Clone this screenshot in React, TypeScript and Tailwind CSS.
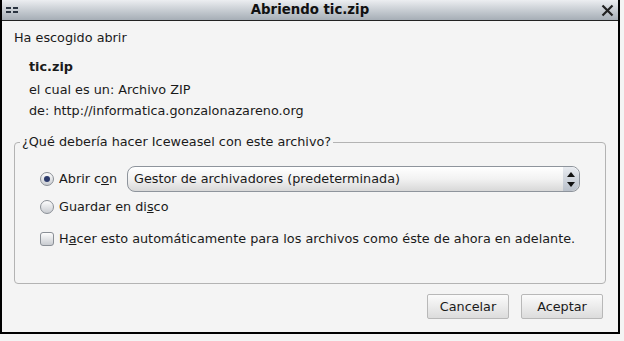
import React from "react";

function Radio({ checked }: { checked?: boolean }) {
  return (
    <span className="flex h-[14px] w-[14px] items-center justify-center rounded-full border border-[#8a8f96] bg-gradient-to-b from-[#fdfdfd] to-[#c9ccd1]">
      {checked && <span className="h-[6px] w-[6px] rounded-full bg-[#2b3a6b]" />}
    </span>
  );
}

export default function App() {
  return (
    <div className="h-[341px] w-[624px] bg-[#f4f4f4] font-['DejaVu_Sans',sans-serif] text-[12.8px] text-[#1a1a1a]">
      <div className="flex h-[334px] w-[620px] flex-col border-x-2 border-b-2 border-black">
        {/* title bar */}
        <div className="relative flex h-[21px] shrink-0 items-center justify-center border-b border-[#222] bg-gradient-to-b from-[#eceef1] to-[#a6aeb6]">
          <div className="absolute left-[4px] top-[7px] grid grid-cols-2 gap-x-[2px] gap-y-[2px]">
            <span className="h-[2px] w-[5px] bg-[#2a3440]" />
            <span className="h-[2px] w-[5px] bg-[#2a3440]" />
            <span className="h-[2px] w-[5px] bg-[#2a3440]" />
            <span className="h-[2px] w-[5px] bg-[#2a3440]" />
          </div>
          <span className="text-[13.3px] font-bold text-[#111]">Abriendo tic.zip</span>
          <svg className="absolute right-[4px] top-[4px]" width="13" height="13" viewBox="0 0 13 13">
            <path d="M1.5 1.5 L11.5 11.5 M11.5 1.5 L1.5 11.5" stroke="#222" strokeWidth="2.2" />
          </svg>
        </div>

        {/* body */}
        <div className="flex flex-1 flex-col px-[12px]">
          <p className="mt-[9px] leading-[16px]">Ha escogido abrir</p>
          <div className="ml-[15px] mt-[13px] flex flex-col">
            <p className="font-bold leading-[16px]">tic.zip</p>
            <p className="mt-[7px] leading-[16px]">el cual es un: Archivo ZIP</p>
            <p className="mt-[5px] leading-[16px]">de: http://informatica.gonzalonazareno.org</p>
          </div>

          <fieldset className="mt-[16px] h-[149px] w-[592px] rounded-[4px] border border-[#b3b3b3] pl-[5px] pr-[4px]">
            <legend className="px-[2px] leading-[14px]">¿Qué debería hacer Iceweasel con este archivo?</legend>
            <div className="pl-[20px]">
              <div className="mt-[17px] flex items-center">
                <Radio checked />
                <span className="ml-[5px] w-[68px]">
                  Abrir c<span className="underline">o</span>n
                </span>
                <div className="flex h-[26px] w-[453px] items-center overflow-hidden rounded-[8px] border border-[#8e949c] bg-gradient-to-b from-[#ffffff] via-[#f2f2f2] to-[#d8d8d8]">
                  <span className="ml-[6px] flex-1">Gestor de archivadores (predeterminada)</span>
                  <div className="flex h-full w-[16px] flex-col items-center justify-center gap-[5px] rounded-r-[8px] bg-gradient-to-b from-[#e8ebf0] to-[#b9c0ca]">
                    <svg width="8" height="5" viewBox="0 0 8 5"><path d="M0 5 L4 0 L8 5 Z" fill="#111" /></svg>
                    <svg width="8" height="5" viewBox="0 0 8 5"><path d="M0 0 L4 5 L8 0 Z" fill="#111" /></svg>
                  </div>
                </div>
              </div>
              <div className="mt-[5px] flex items-center">
                <Radio />
                <span className="ml-[5px]">
                  Guardar en di<span className="underline">s</span>co
                </span>
              </div>
              <div className="mt-[13px] flex items-center">
                <span className="h-[14px] w-[14px] rounded-[3px] border border-[#8a8f96] bg-gradient-to-b from-[#fdfdfd] to-[#c9ccd1]" />
                <span className="ml-[5px]">
                  H<span className="underline">a</span>cer esto automáticamente para los archivos como éste de ahora en adelante.
                </span>
              </div>
            </div>
          </fieldset>

          <div className="mt-[10px] flex justify-end gap-[12px] pr-[3px]">
            <button className="h-[25px] w-[82px] rounded-[2px] border border-[#b8b8b8] bg-gradient-to-b from-[#fbfbfb] to-[#dcdcdc]">
              Cancelar
            </button>
            <button className="h-[25px] w-[82px] rounded-[2px] border border-[#b8b8b8] bg-gradient-to-b from-[#fbfbfb] to-[#dcdcdc]">
              Aceptar
            </button>
          </div>
        </div>
      </div>
    </div>
  );
}
